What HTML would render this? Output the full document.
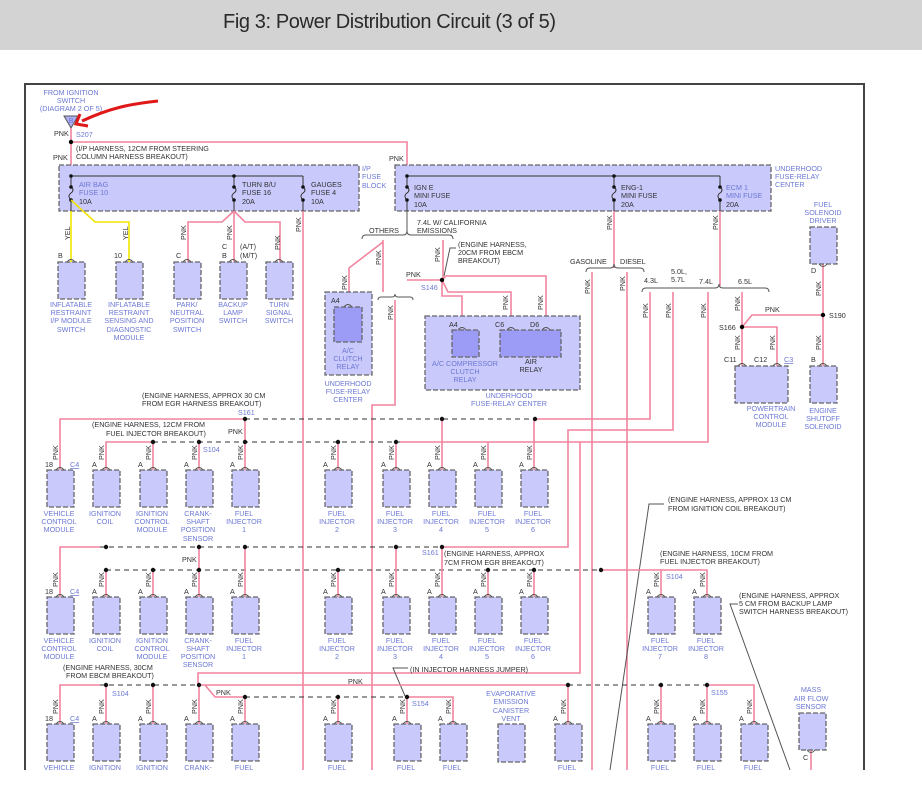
<!DOCTYPE html>
<html><head><meta charset="utf-8"><style>
html,body{margin:0;padding:0;background:#fff}
svg{display:block}
.t{font:7.2px "Liberation Sans",sans-serif;fill:#333}
.b{fill:#6c78d4}
.c{text-anchor:middle}
.p{stroke:#f2849f;stroke-width:1.6;fill:none}
.y{stroke:#f0e400;stroke-width:1.6;fill:none}
.d{stroke:#333;stroke-dasharray:5,4;stroke-width:1;fill:none}
.k{stroke:#333;stroke-width:1;fill:none}
.g{stroke:#555;stroke-width:1;fill:none}
.bx{fill:#c9c9fb;stroke:#666;stroke-width:1.3;stroke-dasharray:5,2}
.in{fill:#9c9cf7;stroke:#666;stroke-width:1.3;stroke-dasharray:5,2}
</style></head><body>
<svg width="922" height="797" viewBox="0 0 922 797" xmlns="http://www.w3.org/2000/svg">
<defs>
<g id="m"><rect class="bx" x="0" y="0" width="27" height="37"/><path d="M9,0 q4,-5 8,0" class="g"/></g>
</defs>
<rect x="0" y="0" width="922" height="50" fill="#d3d3d3"/>
<text x="223" y="28" textLength="333" style="font:20px 'Liberation Sans',sans-serif;fill:#2a2a2a">Fig 3: Power Distribution Circuit (3 of 5)</text>
<path d="M25,797 V84 H864 V797" stroke="#444" stroke-width="2" fill="none"/>

<!-- top source -->
<text class="t b c" x="71" y="95">FROM IGNITION</text>
<text class="t b c" x="71" y="103">SWITCH</text>
<text class="t b c" x="71" y="111">(DIAGRAM 2 OF 5)</text>
<polygon points="64,116 78,116 71,128" fill="#b0b0f2" stroke="#555"/>
<text class="t b c" x="71" y="123">B</text>
<path d="M158,101 C130,104 110,108 82,121" stroke="#e01818" stroke-width="3" fill="none"/>
<path d="M80,114 L76,124 L88,126" stroke="#e01818" stroke-width="3" fill="none"/>
<text class="t" x="54" y="136">PNK</text><text class="t b" x="76" y="137">S207</text>
<path class="p" d="M71,128 V165 M71,142 H407 V165"/>
<circle cx="71" cy="142" r="2.2"/>
<text class="t" x="76" y="151">(I/P HARNESS, 12CM FROM STEERING</text>
<text class="t" x="76" y="159">COLUMN HARNESS BREAKOUT)</text>
<text class="t" x="53" y="160">PNK</text><text class="t" x="389" y="161">PNK</text>

<!-- I/P fuse block -->
<rect class="bx" x="59" y="165" width="300" height="46"/>
<text class="t b" x="362" y="171">I/P</text><text class="t b" x="362" y="179">FUSE</text><text class="t b" x="362" y="188">BLOCK</text>
<path class="k" d="M71,176 H303 M71,176 V187 q4,3 0,6 q-4,3 0,7 V211 M234,176 V187 q4,3 0,6 q-4,3 0,7 V211 M303,176 V187 q4,3 0,6 q-4,3 0,7 V211"/>
<g fill="#111"><circle cx="71" cy="176" r="1.8"/><circle cx="71" cy="187" r="1.8"/><circle cx="71" cy="200" r="1.8"/><circle cx="234" cy="176" r="1.8"/><circle cx="234" cy="187" r="1.8"/><circle cx="234" cy="200" r="1.8"/><circle cx="303" cy="187" r="1.8"/><circle cx="303" cy="200" r="1.8"/></g>
<text class="t b" x="79" y="187">AIR BAG</text><text class="t b" x="79" y="195">FUSE 10</text><text class="t" x="79" y="204">10A</text>
<text class="t" x="242" y="187">TURN B/U</text><text class="t" x="242" y="195">FUSE 16</text><text class="t" x="242" y="204">20A</text>
<text class="t" x="311" y="187">GAUGES</text><text class="t" x="311" y="195">FUSE 4</text><text class="t" x="311" y="204">10A</text>

<!-- Underhood -->
<rect class="bx" x="395" y="165" width="376" height="46"/>
<text class="t b" x="775" y="171">UNDERHOOD</text><text class="t b" x="775" y="179">FUSE-RELAY</text><text class="t b" x="775" y="187">CENTER</text>
<path class="k" d="M407,176 H720 M407,176 V187 q4,3 0,6 q-4,3 0,7 V211 M614,176 V187 q4,3 0,6 q-4,3 0,7 V211 M720,176 V187 q4,3 0,6 q-4,3 0,7 V211"/>
<g fill="#111"><circle cx="407" cy="176" r="1.8"/><circle cx="407" cy="187" r="1.8"/><circle cx="407" cy="200" r="1.8"/><circle cx="614" cy="176" r="1.8"/><circle cx="614" cy="187" r="1.8"/><circle cx="614" cy="200" r="1.8"/><circle cx="720" cy="187" r="1.8"/><circle cx="720" cy="200" r="1.8"/></g>
<text class="t" x="414" y="190">IGN E</text><text class="t" x="414" y="198">MINI FUSE</text><text class="t" x="414" y="207">10A</text>
<text class="t" x="621" y="190">ENG-1</text><text class="t" x="621" y="198">MINI FUSE</text><text class="t" x="621" y="207">20A</text>
<text class="t b" x="726" y="190">ECM 1</text><text class="t b" x="726" y="198">MINI FUSE</text><text class="t" x="726" y="207">20A</text>

<!-- under IP -->
<path class="y" d="M71,211 V262 M71,200 L95,222 H129 V262"/>
<path class="p" d="M234,211 L222,222 H188 V262 M234,211 V262 M234,211 L245,222 H280 V262 M303,211 V770"/>
<use href="#m" x="58" y="262"/><use href="#m" x="116" y="262"/><use href="#m" x="174" y="262"/><use href="#m" x="220" y="262"/><use href="#m" x="266" y="262"/>
<text class="t" x="58" y="258">B</text><text class="t" x="114" y="258">10</text><text class="t" x="176" y="258">C</text><text class="t" x="222" y="249">C</text><text class="t" x="222" y="258">B</text><text class="t" x="240" y="249">(A/T)</text><text class="t" x="240" y="258">(M/T)</text>
<g class="t">
<text transform="translate(70,240) rotate(-90)">YEL</text><text transform="translate(128,240) rotate(-90)">YEL</text>
<text transform="translate(186,240) rotate(-90)">PNK</text><text transform="translate(232,240) rotate(-90)">PNK</text>
<text transform="translate(280,250) rotate(-90)">PNK</text><text transform="translate(301,232) rotate(-90)">PNK</text>
</g>
<g class="t b c">
<text x="71" y="307">INFLATABLE</text><text x="71" y="315">RESTRAINT</text><text x="71" y="323">I/P MODULE</text><text x="71" y="332">SWITCH</text>
<text x="129" y="307">INFLATABLE</text><text x="129" y="315">RESTRAINT</text><text x="129" y="323">SENSING AND</text><text x="129" y="332">DIAGNOSTIC</text><text x="129" y="340">MODULE</text>
<text x="187" y="307">PARK/</text><text x="187" y="315">NEUTRAL</text><text x="187" y="323">POSITION</text><text x="187" y="332">SWITCH</text>
<text x="233" y="307">BACKUP</text><text x="233" y="315">LAMP</text><text x="233" y="323">SWITCH</text>
<text x="279" y="307">TURN</text><text x="279" y="315">SIGNAL</text><text x="279" y="323">SWITCH</text>
</g>

<!-- others area -->
<path class="g" d="M407,211 V232"/>
<path class="g" d="M362,239 q0,-4 4,-4 H403 q4,0 4,-4 q0,4 4,4 H449 q4,0 4,4"/>
<text class="t" x="369" y="233">OTHERS</text>
<text class="t" x="417" y="225">7.4L W/ CALIFORNIA</text><text class="t" x="417" y="233">EMISSIONS</text>
<path class="p" d="M383,240 V292 M383,242 L349,268 V307"/>
<path class="g" d="M378,300 q0,-3 3,-3 H392 q3,0 3,-3 q0,3 3,3 H410 q3,0 3,3"/>
<path class="p" d="M395,300 V405 H372 V770"/>
<rect class="bx" x="325" y="292" width="47" height="83"/>
<rect class="in" x="334" y="307" width="28" height="35"/><path d="M344,307 q4,-5 8,0" class="g"/>
<text class="t" x="331" y="303">A4</text>
<g class="t b c"><text x="348" y="353">A/C</text><text x="348" y="361">CLUTCH</text><text x="348" y="369">RELAY</text>
<text x="348" y="386">UNDERHOOD</text><text x="348" y="394">FUSE-RELAY</text><text x="348" y="402">CENTER</text></g>
<g class="t"><text transform="translate(347,290) rotate(-90)">PNK</text><text transform="translate(381,265) rotate(-90)">PNK</text><text transform="translate(393,320) rotate(-90)">PNK</text><text transform="translate(440,262) rotate(-90)">PNK</text></g>
<path class="p" d="M443,240 V280 M407,280 H442 M442,280 L446,276 H546 V330 M442,280 L448,292 H511 V330 M442,280 V296 H462 V330"/>
<circle cx="442" cy="280" r="2.2"/>
<text class="t b" x="421" y="290">S146</text><text class="t" x="406" y="277">PNK</text>
<path class="g" d="M456,248 H450 L444,276"/>
<text class="t" x="458" y="247">(ENGINE HARNESS,</text><text class="t" x="458" y="255">20CM FROM EBCM</text><text class="t" x="458" y="263">BREAKOUT)</text>
<rect class="bx" x="425" y="316" width="155" height="74"/>
<rect class="in" x="452" y="330" width="27" height="27"/><rect class="in" x="500" y="330" width="61" height="27"/>
<path class="g" d="M458,330 q4,-5 8,0 M507,330 q4,-5 8,0 M542,330 q4,-5 8,0"/>
<text class="t" x="449" y="327">A4</text><text class="t" x="495" y="327">C6</text><text class="t" x="530" y="327">D6</text>
<g class="t"><text transform="translate(508,310) rotate(-90)">PNK</text><text transform="translate(543,310) rotate(-90)">PNK</text></g>
<g class="t b c"><text x="465" y="366">A/C COMPRESSOR</text><text x="465" y="374">CLUTCH</text><text x="465" y="382">RELAY</text>
<text x="509" y="398">UNDERHOOD</text><text x="509" y="406">FUSE-RELAY CENTER</text></g>
<text class="t c" x="531" y="364">AIR</text><text class="t c" x="531" y="372">RELAY</text>

<!-- right side -->
<path class="p" d="M614,211 V268 M720,211 V286 M592,272 V770 M627,272 V770"/>
<path class="g" d="M586,272 q0,-4 4,-4 H610 q4,0 4,-4 q0,4 4,4 H640 q4,0 4,4"/>
<text class="t" x="570" y="264">GASOLINE</text><text class="t" x="620" y="264">DIESEL</text>
<path class="g" d="M642,292 q0,-4 4,-4 H715 q4,0 4,-4 q0,4 4,4 H765 q4,0 4,4"/>
<text class="t" x="644" y="283">4.3L</text><text class="t" x="671" y="274">5.0L,</text><text class="t" x="671" y="282">5.7L</text><text class="t" x="699" y="284">7.4L</text><text class="t" x="738" y="284">6.5L</text>
<g class="t"><text transform="translate(612,230) rotate(-90)">PNK</text><text transform="translate(718,230) rotate(-90)">PNK</text>
<text transform="translate(590,294) rotate(-90)">PNK</text><text transform="translate(625,291) rotate(-90)">PNK</text>
<text transform="translate(648,318) rotate(-90)">PNK</text><text transform="translate(671,318) rotate(-90)">PNK</text><text transform="translate(706,318) rotate(-90)">PNK</text>
<text transform="translate(740,311) rotate(-90)">PNK</text><text transform="translate(740,350) rotate(-90)">PNK</text><text transform="translate(775,350) rotate(-90)">PNK</text>
<text transform="translate(821,296) rotate(-90)">PNK</text><text transform="translate(821,350) rotate(-90)">PNK</text></g>
<path class="p" d="M650,292 V419 H534 M673,292 V430 H568 V547 H442 M708,292 V442 H580 V673 H198 V685 M400,442 H580"/>
<path class="p" d="M742,292 V366 M742,327 L752,315 H823 M742,327 H777 V366 M823,264 V366"/>
<circle cx="742" cy="327" r="2.2"/><circle cx="823" cy="315" r="2.2"/>
<text class="t" x="719" y="330">S166</text><text class="t" x="829" y="318">S190</text><text class="t" x="765" y="312">PNK</text>
<rect class="bx" x="810" y="227" width="27" height="37"/><path class="g" d="M819,264 q4,5 8,0"/>
<g class="t b c"><text x="823" y="207">FUEL</text><text x="823" y="215">SOLENOID</text><text x="823" y="223">DRIVER</text>
<text x="823" y="413">ENGINE</text><text x="823" y="421">SHUTOFF</text><text x="823" y="429">SOLENOID</text>
<text x="771" y="411">POWERTRAIN</text><text x="771" y="419">CONTROL</text><text x="771" y="427">MODULE</text></g>
<text class="t" x="811" y="273">D</text><text class="t" x="811" y="362">B</text>
<use href="#m" x="810" y="366"/>
<rect class="bx" x="735" y="366" width="53" height="37"/><path class="g" d="M738,366 q4,-5 8,0 M773,366 q4,-5 8,0"/>
<text class="t" x="724" y="362">C11</text><text class="t" x="754" y="362">C12</text><text class="t b" x="784" y="362" text-decoration="underline">C3</text>

<!-- notes -->
<text class="t" x="142" y="398">(ENGINE HARNESS, APPROX 30 CM</text><text class="t" x="142" y="406">FROM EGR HARNESS BREAKOUT)</text>
<text class="t b" x="238" y="415">S161</text>
<text class="t" x="92" y="427">(ENGINE HARNESS, 12CM FROM</text><text class="t" x="106" y="436">FUEL INJECTOR BREAKOUT)</text>
<text class="t" x="228" y="434">PNK</text><text class="t b" x="203" y="452">S104</text>

<!-- row1 -->
<path class="d" d="M245,419 H535 M153,442 H400"/>
<path class="p" d="M60,470 V419 H245 V470 M106,470 V442 H153 V470 M199,442 V470 M338,442 V470 M396,442 V470 M442,419 V470 M488,442 V470 M534,419 V470"/>
<g fill="#111"><circle cx="245" cy="419" r="2.2"/><circle cx="442" cy="419" r="2.2"/><circle cx="535" cy="419" r="2.2"/><circle cx="153" cy="442" r="2.2"/><circle cx="199" cy="442" r="2.2"/><circle cx="245" cy="442" r="2.2"/><circle cx="338" cy="442" r="2.2"/><circle cx="396" cy="442" r="2.2"/></g>
<use href="#m" x="47" y="470"/><use href="#m" x="93" y="470"/><use href="#m" x="140" y="470"/><use href="#m" x="186" y="470"/><use href="#m" x="232" y="470"/><use href="#m" x="325" y="470"/><use href="#m" x="383" y="470"/><use href="#m" x="429" y="470"/><use href="#m" x="475" y="470"/><use href="#m" x="521" y="470"/>
<g class="t"><text x="45" y="467">18</text><text class="b" x="70" y="467" text-decoration="underline">C4</text>
<text x="92" y="467">A</text><text x="138" y="467">A</text><text x="184" y="467">A</text><text x="230" y="467">A</text><text x="323" y="467">A</text><text x="381" y="467">A</text><text x="427" y="467">A</text><text x="473" y="467">A</text><text x="519" y="467">A</text>
<text transform="translate(58,460) rotate(-90)">PNK</text><text transform="translate(104,460) rotate(-90)">PNK</text><text transform="translate(151,460) rotate(-90)">PNK</text><text transform="translate(197,460) rotate(-90)">PNK</text><text transform="translate(243,460) rotate(-90)">PNK</text><text transform="translate(336,460) rotate(-90)">PNK</text><text transform="translate(394,460) rotate(-90)">PNK</text><text transform="translate(440,460) rotate(-90)">PNK</text><text transform="translate(486,460) rotate(-90)">PNK</text><text transform="translate(532,460) rotate(-90)">PNK</text></g>
<g class="t b c">
<text x="59" y="516">VEHICLE</text><text x="59" y="524">CONTROL</text><text x="59" y="532">MODULE</text>
<text x="105" y="516">IGNITION</text><text x="105" y="524">COIL</text>
<text x="152" y="516">IGNITION</text><text x="152" y="524">CONTROL</text><text x="152" y="532">MODULE</text>
<text x="198" y="516">CRANK-</text><text x="198" y="524">SHAFT</text><text x="198" y="532">POSITION</text><text x="198" y="541">SENSOR</text>
<text x="244" y="516">FUEL</text><text x="244" y="524">INJECTOR</text><text x="244" y="532">1</text>
<text x="337" y="516">FUEL</text><text x="337" y="524">INJECTOR</text><text x="337" y="532">2</text>
<text x="395" y="516">FUEL</text><text x="395" y="524">INJECTOR</text><text x="395" y="532">3</text>
<text x="441" y="516">FUEL</text><text x="441" y="524">INJECTOR</text><text x="441" y="532">4</text>
<text x="487" y="516">FUEL</text><text x="487" y="524">INJECTOR</text><text x="487" y="532">5</text>
<text x="533" y="516">FUEL</text><text x="533" y="524">INJECTOR</text><text x="533" y="532">6</text>
</g>

<!-- row2 -->
<path class="g" d="M664,504 H649 L610,770 M738,604 H730 L790,770"/>
<text class="t" x="668" y="502">(ENGINE HARNESS, APPROX 13 CM</text><text class="t" x="668" y="511">FROM IGNITION COIL BREAKOUT)</text>
<text class="t" x="660" y="556">(ENGINE HARNESS, 10CM FROM</text><text class="t" x="660" y="564">FUEL INJECTOR BREAKOUT)</text>
<text class="t" x="739" y="598">(ENGINE HARNESS, APPROX</text><text class="t" x="739" y="606">5 CM FROM BACKUP LAMP</text><text class="t" x="739" y="614">SWITCH HARNESS BREAKOUT)</text>
<text class="t b" x="422" y="555">S161</text><text class="t" x="444" y="556">(ENGINE HARNESS, APPROX</text><text class="t" x="444" y="565">7CM FROM EGR BREAKOUT)</text>
<text class="t" x="182" y="562">PNK</text><text class="t b" x="666" y="579">S104</text>
<path class="d" d="M100,547 H442 M106,570 H601"/>
<path class="p" d="M60,597 V547 H100 M106,570 V597 M153,570 V597 M199,547 V597 M245,547 V597 M338,570 V597 M396,547 V597 M442,547 V597 M488,570 V597 M534,570 V597 M601,570 H707 V597 M661,570 V597"/>
<g fill="#111"><circle cx="106" cy="547" r="2.2"/><circle cx="199" cy="547" r="2.2"/><circle cx="245" cy="547" r="2.2"/><circle cx="396" cy="547" r="2.2"/><circle cx="442" cy="547" r="2.2"/><circle cx="106" cy="570" r="2.2"/><circle cx="153" cy="570" r="2.2"/><circle cx="199" cy="570" r="2.2"/><circle cx="338" cy="570" r="2.2"/><circle cx="488" cy="570" r="2.2"/><circle cx="534" cy="570" r="2.2"/><circle cx="601" cy="570" r="2.2"/></g>
<use href="#m" x="47" y="597"/><use href="#m" x="93" y="597"/><use href="#m" x="140" y="597"/><use href="#m" x="186" y="597"/><use href="#m" x="232" y="597"/><use href="#m" x="325" y="597"/><use href="#m" x="383" y="597"/><use href="#m" x="429" y="597"/><use href="#m" x="475" y="597"/><use href="#m" x="521" y="597"/><use href="#m" x="648" y="597"/><use href="#m" x="694" y="597"/>
<g class="t"><text x="45" y="594">18</text><text class="b" x="70" y="594" text-decoration="underline">C4</text>
<text x="92" y="594">A</text><text x="138" y="594">A</text><text x="184" y="594">A</text><text x="230" y="594">A</text><text x="323" y="594">A</text><text x="381" y="594">A</text><text x="427" y="594">A</text><text x="473" y="594">A</text><text x="519" y="594">A</text><text x="646" y="594">A</text><text x="692" y="594">A</text>
<text transform="translate(58,587) rotate(-90)">PNK</text><text transform="translate(104,587) rotate(-90)">PNK</text><text transform="translate(151,587) rotate(-90)">PNK</text><text transform="translate(197,587) rotate(-90)">PNK</text><text transform="translate(243,587) rotate(-90)">PNK</text><text transform="translate(336,587) rotate(-90)">PNK</text><text transform="translate(394,587) rotate(-90)">PNK</text><text transform="translate(440,587) rotate(-90)">PNK</text><text transform="translate(486,587) rotate(-90)">PNK</text><text transform="translate(532,587) rotate(-90)">PNK</text><text transform="translate(659,587) rotate(-90)">PNK</text><text transform="translate(705,587) rotate(-90)">PNK</text></g>
<g class="t b c">
<text x="59" y="643">VEHICLE</text><text x="59" y="651">CONTROL</text><text x="59" y="659">MODULE</text>
<text x="105" y="643">IGNITION</text><text x="105" y="651">COIL</text>
<text x="152" y="643">IGNITION</text><text x="152" y="651">CONTROL</text><text x="152" y="659">MODULE</text>
<text x="198" y="643">CRANK-</text><text x="198" y="651">SHAFT</text><text x="198" y="659">POSITION</text><text x="198" y="667">SENSOR</text>
<text x="244" y="643">FUEL</text><text x="244" y="651">INJECTOR</text><text x="244" y="659">1</text>
<text x="337" y="643">FUEL</text><text x="337" y="651">INJECTOR</text><text x="337" y="659">2</text>
<text x="395" y="643">FUEL</text><text x="395" y="651">INJECTOR</text><text x="395" y="659">3</text>
<text x="441" y="643">FUEL</text><text x="441" y="651">INJECTOR</text><text x="441" y="659">4</text>
<text x="487" y="643">FUEL</text><text x="487" y="651">INJECTOR</text><text x="487" y="659">5</text>
<text x="533" y="643">FUEL</text><text x="533" y="651">INJECTOR</text><text x="533" y="659">6</text>
<text x="660" y="643">FUEL</text><text x="660" y="651">INJECTOR</text><text x="660" y="659">7</text>
<text x="706" y="643">FUEL</text><text x="706" y="651">INJECTOR</text><text x="706" y="659">8</text>
</g>

<!-- row3 -->
<text class="t" x="63" y="670">(ENGINE HARNESS, 30CM</text><text class="t" x="66" y="678">FROM EBCM BREAKOUT)</text>
<text class="t b" x="112" y="696">S104</text><text class="t" x="348" y="684">PNK</text><text class="t" x="216" y="695">PNK</text>
<text class="t" x="410" y="672">(IN INJECTOR HARNESS JUMPER)</text>
<path class="g" d="M408,668 H393 L405,696"/>
<text class="t b" x="412" y="706">S154</text><text class="t b" x="711" y="695">S155</text>
<path class="d" d="M100,685 H199 M568,685 H707 M245,697 H407"/>
<path class="p" d="M60,724 V685 H100 M106,685 V724 M153,685 V724 M199,685 H568 V724 M199,685 V724 M205,685 L215,697 H245 V724 M338,697 V724 M407,697 V724 M407,697 H453 V724 M661,685 V724 M707,685 H754 V724 M707,685 V724 M811,750 V770"/>
<g fill="#111"><circle cx="106" cy="685" r="2.2"/><circle cx="153" cy="685" r="2.2"/><circle cx="199" cy="685" r="2.2"/><circle cx="568" cy="685" r="2.2"/><circle cx="661" cy="685" r="2.2"/><circle cx="707" cy="685" r="2.2"/><circle cx="245" cy="697" r="2.2"/><circle cx="338" cy="697" r="2.2"/><circle cx="407" cy="697" r="2.2"/></g>
<use href="#m" x="47" y="724"/><use href="#m" x="93" y="724"/><use href="#m" x="140" y="724"/><use href="#m" x="186" y="724"/><use href="#m" x="232" y="724"/><use href="#m" x="325" y="724"/><use href="#m" x="394" y="724"/><use href="#m" x="440" y="724"/><use href="#m" x="555" y="724"/><use href="#m" x="648" y="724"/><use href="#m" x="694" y="724"/><use href="#m" x="741" y="724"/>
<rect class="bx" x="498" y="724" width="27" height="38"/>
<rect class="bx" x="799" y="713" width="27" height="37"/><path class="g" d="M807,750 q4,5 8,0"/>
<g class="t b c"><text x="511" y="696">EVAPORATIVE</text><text x="511" y="704">EMISSION</text><text x="511" y="713">CANISTER</text><text x="511" y="721">VENT</text>
<text x="811" y="692">MASS</text><text x="811" y="701">AIR FLOW</text><text x="811" y="709">SENSOR</text></g>
<g class="t"><text x="45" y="721">18</text><text class="b" x="70" y="721" text-decoration="underline">C4</text>
<text x="92" y="721">A</text><text x="138" y="721">A</text><text x="184" y="721">A</text><text x="230" y="721">A</text><text x="323" y="721">A</text><text x="392" y="721">A</text><text x="438" y="721">A</text><text x="553" y="721">A</text><text x="646" y="721">A</text><text x="692" y="721">A</text><text x="739" y="721">A</text><text x="803" y="760">C</text>
<text transform="translate(58,714) rotate(-90)">PNK</text><text transform="translate(104,714) rotate(-90)">PNK</text><text transform="translate(151,714) rotate(-90)">PNK</text><text transform="translate(197,714) rotate(-90)">PNK</text><text transform="translate(243,714) rotate(-90)">PNK</text><text transform="translate(336,714) rotate(-90)">PNK</text><text transform="translate(405,714) rotate(-90)">PNK</text><text transform="translate(451,714) rotate(-90)">PNK</text><text transform="translate(566,714) rotate(-90)">PNK</text><text transform="translate(659,714) rotate(-90)">PNK</text><text transform="translate(705,714) rotate(-90)">PNK</text><text transform="translate(752,714) rotate(-90)">PNK</text></g>
<g class="t b c">
<text x="59" y="770">VEHICLE</text><text x="105" y="770">IGNITION</text><text x="152" y="770">IGNITION</text><text x="198" y="770">CRANK-</text><text x="244" y="770">FUEL</text><text x="337" y="770">FUEL</text><text x="406" y="770">FUEL</text><text x="452" y="770">FUEL</text><text x="567" y="770">FUEL</text><text x="660" y="770">FUEL</text><text x="706" y="770">FUEL</text><text x="753" y="770">FUEL</text>
</g>
<rect x="0" y="770" width="922" height="27" fill="#fff"/>
</svg>
</body></html>
